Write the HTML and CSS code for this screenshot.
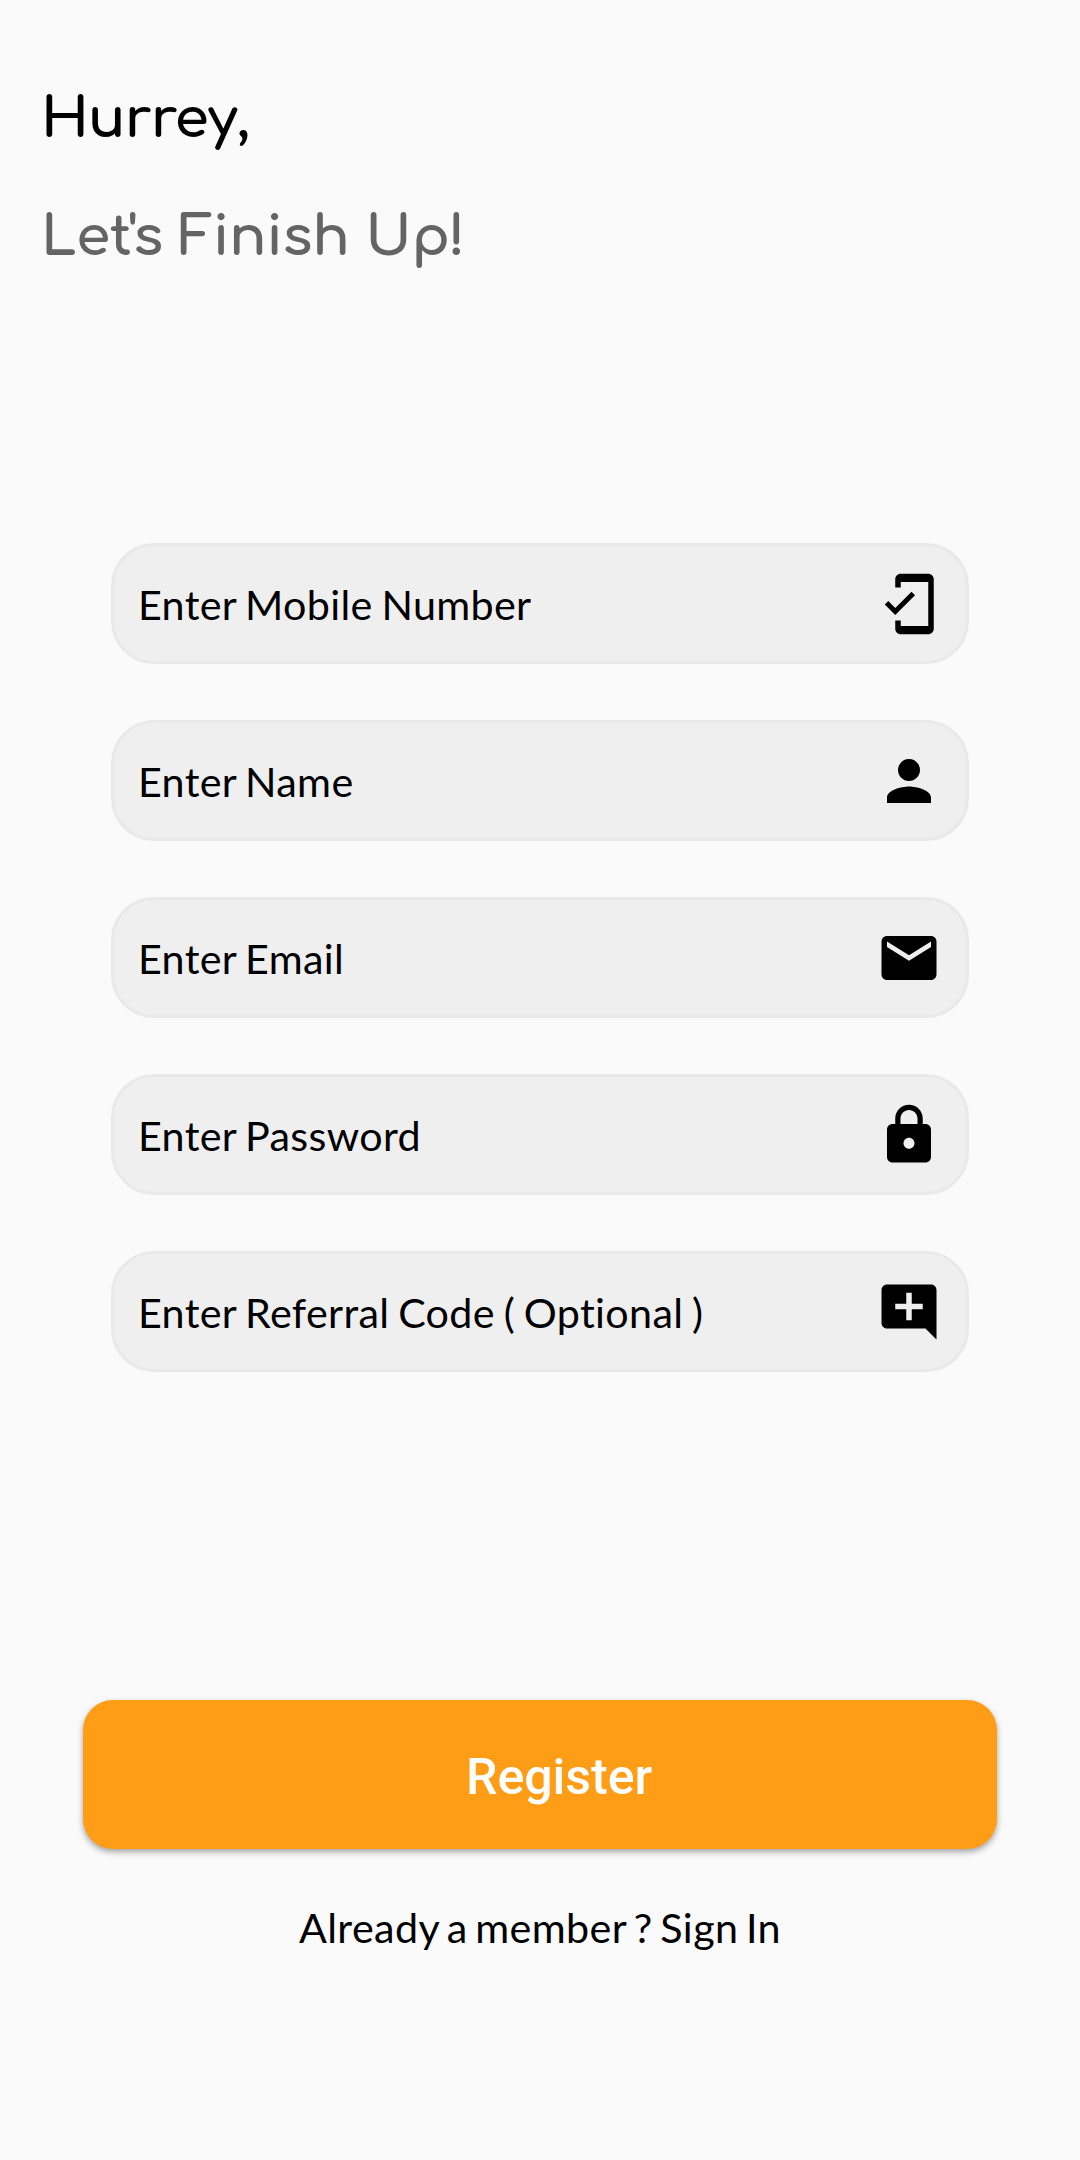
FILE: index.html
```
<!DOCTYPE html>
<html lang="en">
<head>
  <meta charset="UTF-8">
  <meta name="viewport" content="width=device-width, initial-scale=1.0">
  <title>Register</title>
  <link rel="stylesheet" href="styles.css">
</head>
<body>
<main class="screen">
  <header class="heading">
    <h1 class="title">Hurrey,</h1>
    <h2 class="subtitle">Let's Finish Up!</h2>
  </header>

  <form class="form">
    <div class="fields">
      <label class="field">
        <input type="tel" placeholder="Enter Mobile Number">
        <svg class="icon" viewBox="0 0 24 24"><path d="M19 1H9c-1.1 0-2 .9-2 2v3h2V4h10v16H9v-2H7v3c0 1.1.9 2 2 2h10c1.1 0 2-.9 2-2V3c0-1.1-.9-2-2-2zM7.01 13.47l-2.55-2.55-1.27 1.27L7 16l7.19-7.19-1.27-1.27z"/></svg>
      </label>
      <label class="field">
        <input type="text" placeholder="Enter Name">
        <svg class="icon" viewBox="0 0 24 24"><path d="M12 12c2.21 0 4-1.79 4-4s-1.79-4-4-4-4 1.79-4 4 1.79 4 4 4zm0 2c-2.67 0-8 1.34-8 4v2h16v-2c0-2.66-5.33-4-8-4z"/></svg>
      </label>
      <label class="field">
        <input type="email" placeholder="Enter Email">
        <svg class="icon" viewBox="0 0 24 24"><path d="M20 4H4c-1.1 0-1.99.9-1.99 2L2 18c0 1.1.9 2 2 2h16c1.1 0 2-.9 2-2V6c0-1.1-.9-2-2-2zm0 4l-8 5-8-5V6l8 5 8-5v2z"/></svg>
      </label>
      <label class="field">
        <input type="password" placeholder="Enter Password">
        <svg class="icon" viewBox="0 0 24 24"><path d="M18 8h-1V6c0-2.76-2.24-5-5-5S7 3.24 7 6v2H6c-1.1 0-2 .9-2 2v10c0 1.1.9 2 2 2h12c1.1 0 2-.9 2-2V10c0-1.1-.9-2-2-2zm-6 9c-1.1 0-2-.9-2-2s.9-2 2-2 2 .9 2 2-.9 2-2 2zm3.1-9H8.9V6c0-1.71 1.39-3.1 3.1-3.1 1.71 0 3.1 1.39 3.1 3.1v2z"/></svg>
      </label>
      <label class="field">
        <input type="text" placeholder="Enter Referral Code ( Optional )">
        <svg class="icon" viewBox="0 0 24 24"><path d="M22 4c0-1.1-.9-2-2-2H4c-1.1 0-2 .9-2 2v12c0 1.1.9 2 2 2h14l4 4V4zm-5 7h-4v4h-2v-4H7V9h4V5h2v4h4v2z"/></svg>
      </label>
    </div>

    <button class="btn" type="button">Register</button>
  </form>

  <p class="signin">Already a member ? Sign In</p>
</main>
</body>
</html>
```
FILE: styles.css
```
* {
  box-sizing: border-box;
  margin: 0;
  padding: 0;
}

body {
  background-color: #fafafa;
  color: #000;
  font-family: Lato, sans-serif;
}

.screen {
  display: flex;
  flex-direction: column;
  min-height: 2160px;
}

.heading {
  height: 543px;
  padding: 61px 41px 0;
}

.title,
.subtitle {
  height: 118px;
  font-family: Comfortaa, Lato, sans-serif;
  font-size: 55px;
  font-weight: 700;
  line-height: 118px;
  white-space: nowrap;
}

.title {
  letter-spacing: -0.8px;
}

.subtitle {
  color: #646464;
  letter-spacing: -0.3px;
}

.form {
  display: flex;
  flex-direction: column;
}

.fields {
  display: flex;
  flex-direction: column;
  gap: 56px;
  padding: 0 111px;
}

.field {
  display: flex;
  align-items: center;
  height: 121px;
  padding: 0 24px;
  background-color: #efefef;
  border: 3px solid #e9e9e9;
  border-radius: 43px;
}

.field input {
  flex: 1;
  height: 66px;
  background: none;
  border: none;
  outline: none;
  font-family: inherit;
  font-size: 41.25px;
  letter-spacing: 0.35px;
  word-spacing: -2.2px;
}

.field input::placeholder {
  color: #000;
  opacity: 1;
}

.icon {
  width: 66px;
  height: 66px;
  fill: #000;
}

.btn {
  height: 149px;
  margin: 328px 83px 0;
  padding: 4px 0 0 38px;
  background-color: #ff9d17;
  border: none;
  border-radius: 30px;
  box-shadow: 0 3px 6px rgba(0, 0, 0, 0.35);
  color: #fff;
  font-family: Roboto, sans-serif;
  font-size: 50px;
  font-weight: 500;
}

.signin {
  margin-top: 53px;
  font-size: 41.25px;
  line-height: 50px;
  letter-spacing: 0.4px;
  word-spacing: -3.4px;
  text-align: center;
}
```
